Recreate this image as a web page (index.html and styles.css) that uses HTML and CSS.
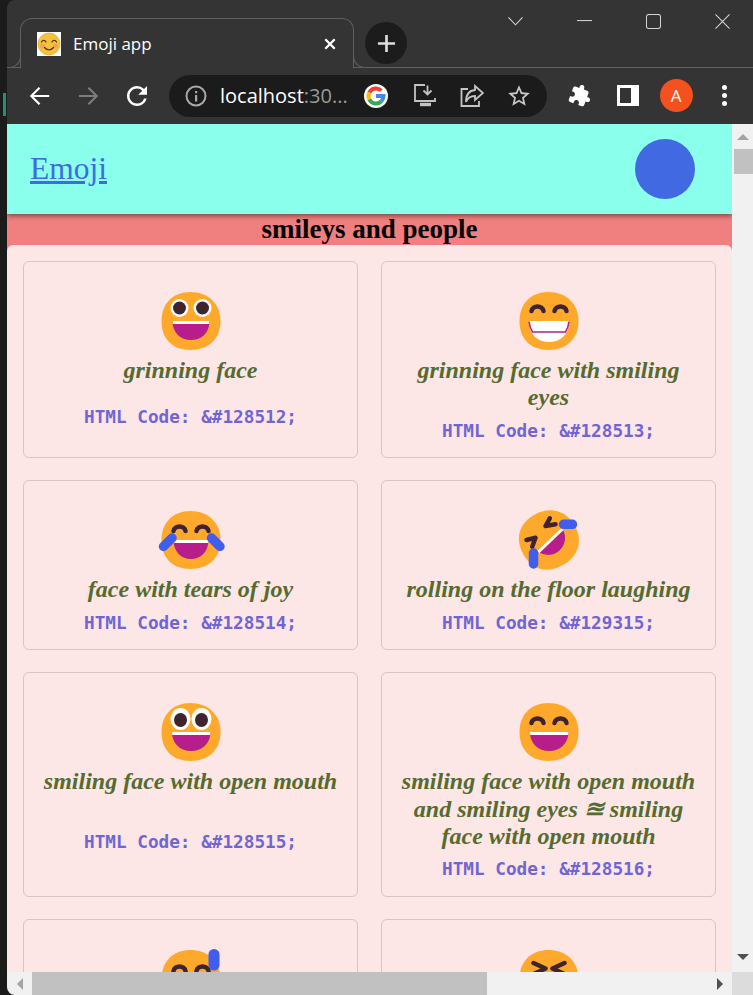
FILE: index.html
```html
<!DOCTYPE html>
<html>
<head>
  <title>Emoji app</title>
  <link rel="stylesheet" href="styles.css">
</head>
<body>
  <svg class="defs" width="0" height="0">
    <defs>
      <path id="face" d="M30 1C48 1 60 13 60 30C60 48 48 59 30 59C12 59 1 48 1 30C1 13 12 1 30 1Z"/>
    </defs>
  </svg>

  <div class="desktop">
    <div class="edge"><div class="edge-mark"></div></div>

    <div class="window">
      <!-- tab strip -->
      <div class="tabstrip">
        <div class="tab">
          <svg class="favicon" viewBox="0 0 24 24">
            <rect width="24" height="24" fill="#fff"/>
            <circle cx="12" cy="12" r="11" fill="#f5c33b" stroke="#e0a030" stroke-width=".6"/>
            <circle cx="5.5" cy="14" r="2.6" fill="#f3a35c"/>
            <circle cx="18.5" cy="14" r="2.6" fill="#f3a35c"/>
            <path d="M4.5 10c1-2.2 3.5-2.2 4.5 0M15 10c1-2.2 3.500-2.200 4.500 0M7.500 15.500c2.500 3.200 6.500 3.200 9 0" fill="none" stroke="#5b3a1c" stroke-width="1.300" stroke-linecap="round"/>
          </svg>
          <span class="tab-title">Emoji app</span>
          <svg class="tab-close" viewBox="0 0 14 14"><path d="M1.500 1.500L12.500 12.500M12.500 1.500L1.500 12.500"/></svg>
        </div>
        <div class="newtab">
          <svg viewBox="0 0 20 20"><path d="M10 1V19M1 10H19"/></svg>
        </div>
        <div class="wincontrols">
          <div class="winbtn"><svg viewBox="0 0 16 16"><path d="M.5 3.500L8 11.500L15.500 3.500"/></svg></div>
          <div class="winbtn"><svg viewBox="0 0 16 16"><path d="M0 7H16"/></svg></div>
          <div class="winbtn"><svg viewBox="0 0 16 16"><rect x=".5" y=".5" width="15" height="15" rx="2.500"/></svg></div>
          <div class="winbtn"><svg viewBox="0 0 16 16"><path d="M.5 .5L15.500 15.500M15.500 .5L.5 15.500"/></svg></div>
        </div>
      </div>

      <!-- toolbar -->
      <div class="toolbar">
        <div class="toolbtn">
          <svg class="line-icon" viewBox="0 0 24 24"><path d="M22 12H3M11.500 3L2.500 12L11.500 21"/></svg>
        </div>
        <div class="toolbtn dim">
          <svg class="line-icon" viewBox="0 0 24 24"><path d="M2 12H21M12.500 3L21.500 12L12.500 21"/></svg>
        </div>
        <div class="toolbtn reload">
          <svg class="fill-icon" viewBox="0 0 24 24"><path d="M17.650 6.350A7.958 7.958 0 0 0 12 4c-4.420 0-7.990 3.580-7.990 8s3.570 8 7.990 8c3.730 0 6.840-2.550 7.730-6h-2.080A5.990 5.990 0 0 1 12 18c-3.310 0-6-2.690-6-6s2.690-6 6-6c1.660 0 3.140.69 4.220 1.780L13 11h7V4l-2.350 2.350z"/></svg>
        </div>

        <div class="omnibox">
          <svg class="info" viewBox="0 0 24 24">
            <circle cx="12" cy="12" r="9.500" fill="none" stroke="#a8a8a8" stroke-width="2"/>
            <rect x="11" y="11" width="2.200" height="6.500" fill="#a8a8a8"/>
            <rect x="11" y="7" width="2.200" height="2.200" fill="#a8a8a8"/>
          </svg>
          <div class="url"><span class="host">localhost</span>:30...</div>
          <div class="omni-btn">
            <svg class="google" viewBox="0 0 24 24">
              <circle cx="12" cy="12" r="12" fill="#fff"/>
              <g fill="none" stroke-width="4">
                <path d="M17.300 6.700A7.500 7.500 0 0 0 5.300 8.600" stroke="#ea4335"/>
                <path d="M5.300 8.600A7.500 7.500 0 0 0 5.300 15.400" stroke="#fbbc05"/>
                <path d="M5.300 15.400A7.500 7.500 0 0 0 17.500 17.100" stroke="#34a853"/>
                <path d="M17.500 17.100A7.500 7.500 0 0 0 19.500 12H12" stroke="#4285f4"/>
              </g>
            </svg>
          </div>
          <div class="omni-btn after-google">
            <svg class="line-icon gray" viewBox="0 0 24 24">
              <path d="M12 1H2V17H22V14"/>
              <path d="M14.500 1.500V10M10.500 6.500L14.500 10.500L18.500 6.500"/>
              <path d="M7 20.500H18" class="thick"/>
            </svg>
          </div>
          <div class="omni-btn">
            <svg class="line-icon gray thin" viewBox="0 0 24 24">
              <path d="M8 5H1.500V22H19V17"/>
              <path d="M15 2L23 9L15 16V12C10 12 7.500 14 6 18C6 11 9 6.500 15 6Z"/>
            </svg>
          </div>
          <div class="omni-btn">
            <svg class="fill-icon gray" viewBox="0 0 24 24"><path d="M22 9.240l-7.190-.62L12 2 9.190 8.630 2 9.240l5.460 4.730L5.820 21 12 17.270 18.180 21l-1.630-7.030L22 9.240zM12 15.400l-3.760 2.270 1-4.280-3.320-2.880 4.380-.38L12 6.100l1.710 4.040 4.380.38-3.320 2.880 1 4.280L12 15.400z"/></svg>
          </div>
        </div>

        <div class="toolbtn first-ext">
          <svg class="fill-icon" viewBox="0 0 24 24"><path d="M20.500 11H19V7c0-1.100-.9-2-2-2h-4V3.500C13 2.120 11.880 1 10.500 1S8 2.120 8 3.500V5H4c-1.100 0-1.990.9-1.990 2v3.800H3.500c1.490 0 2.700 1.210 2.700 2.700s-1.210 2.700-2.700 2.700H2V20c0 1.100.9 2 2 2h3.800v-1.500c0-1.490 1.210-2.700 2.700-2.700 1.490 0 2.700 1.210 2.700 2.700V22H17c1.100 0 2-.9 2-2v-4h1.500c1.380 0 2.500-1.120 2.500-2.500S21.880 11 20.500 11z"/></svg>
        </div>
        <div class="toolbtn">
          <div class="sidepanel"><div class="sidepanel-left"></div></div>
        </div>
        <div class="toolbtn">
          <div class="avatar">A</div>
        </div>
        <div class="toolbtn">
          <div class="dots"><i></i><i></i><i></i></div>
        </div>
      </div>

      <!-- browser viewport -->
      <div class="viewport">
        <div class="page">
          <div class="header">
            <a class="brand" href="#">Emoji</a>
            <div class="user-dot"></div>
          </div>
          <div class="group-title">smileys and people</div>
          <div class="panel">
            <div class="grid">

              <div class="card">
                <svg class="emoji" viewBox="0 0 60 60">
                  <use href="#face" class="skin"/>
                  <circle cx="19" cy="17" r="9" class="white"/><circle cx="42" cy="17" r="9" class="white"/>
                  <circle cx="19" cy="17" r="6.500" class="pupil"/><circle cx="42" cy="17" r="6.500" class="pupil"/>
                  <path d="M12 30H49C49 42 41 49 30.500 49C20 49 12 42 12 30Z" class="mouth"/>
                  <path d="M12 30H49L48.700 33H12.300Z" class="white"/>
                </svg>
                <div class="name">grinning face</div>
                <div class="code">HTML Code: &amp;#128512;</div>
              </div>

              <div class="card">
                <svg class="emoji" viewBox="0 0 60 60">
                  <use href="#face" class="skin"/>
                  <path d="M13 20C14 14 24 14 25 20M36 20C37 14 47 14 48 20" class="arc"/>
                  <path d="M10 30H51C50 44 42 51 30.500 51C19 51 11 44 10 30Z" class="white"/>
                  <path d="M10.500 30.500C11 35 12 38 14 41H47C49 38 50 35 50.500 30.500" class="smile-line"/>
                </svg>
                <div class="name">grinning face with smiling eyes</div>
                <div class="code">HTML Code: &amp;#128513;</div>
              </div>

              <div class="card">
                <svg class="emoji" viewBox="0 0 60 60">
                  <use href="#face" class="skin"/>
                  <path d="M13 21C14 15 24 15 25 21M36 21C37 15 47 15 48 21" class="arc"/>
                  <path d="M13 30H48C48 42 40 49 30.500 49C21 49 13 42 13 30Z" class="mouth"/>
                  <path d="M13 30H48L47.700 33H13.300Z" class="white"/>
                  <path d="M11.500 28L3 36.500M51 28L59.500 36.500" class="tear"/>
                </svg>
                <div class="name">face with tears of joy</div>
                <div class="code">HTML Code: &amp;#128514;</div>
              </div>

              <div class="card">
                <svg class="emoji" viewBox="0 0 60 60">
                  <use href="#face" class="skin" transform="rotate(-30 30 30)"/>
                  <path d="M31.300 8.300L27 16L37 14.300M8 30L17 27.700L13.700 36.700" class="chevron"/>
                  <path d="M44 19A17 17 0 0 1 20 42Z" class="mouth"/>
                  <path d="M44 19L20 42" class="teeth"/>
                  <path d="M45 14.300H54M15 43V54" class="tear"/>
                </svg>
                <div class="name">rolling on the floor laughing</div>
                <div class="code">HTML Code: &amp;#129315;</div>
              </div>

              <div class="card">
                <svg class="emoji" viewBox="0 0 60 60">
                  <use href="#face" class="skin"/>
                  <ellipse cx="20" cy="17" rx="10" ry="11" class="white"/><ellipse cx="41" cy="17" rx="10" ry="11" class="white"/>
                  <ellipse cx="20" cy="18" rx="6.500" ry="7" class="pupil"/><ellipse cx="41" cy="18" rx="6.500" ry="7" class="pupil"/>
                  <path d="M11.500 30H50C50 42 41 49 30.500 49C20 49 11.500 42 11.500 30Z" class="mouth"/>
                  <path d="M11.500 30H50L49.700 33H11.800Z" class="white"/>
                </svg>
                <div class="name">smiling face with open mouth</div>
                <div class="code">HTML Code: &amp;#128515;</div>
              </div>

              <div class="card">
                <svg class="emoji" viewBox="0 0 60 60">
                  <use href="#face" class="skin"/>
                  <path d="M13 21C14 15 24 15 25 21M36 21C37 15 47 15 48 21" class="arc"/>
                  <path d="M11.500 30H50C50 42 41 49 30.500 49C20 49 11.500 42 11.500 30Z" class="mouth"/>
                  <path d="M11.500 30H50L49.700 33H11.800Z" class="white"/>
                </svg>
                <div class="name">smiling face with open mouth and smiling eyes ≊ smiling face with open mouth</div>
                <div class="code">HTML Code: &amp;#128516;</div>
              </div>

              <!-- last row runs under the scrollbar, only the emoji tops show -->
              <div class="card card-cut">
                <svg class="emoji" viewBox="0 0 60 60">
                  <use href="#face" class="skin"/>
                  <path d="M13 22C14 16 24 16 25 22M36 22C37 16 47 16 48 22" class="arc"/>
                  <path d="M53.500 5.500V16" class="tear wide"/>
                  <path d="M11.500 30H50C50 42 41 49 30.500 49C20 49 11.500 42 11.500 30Z" class="mouth"/>
                </svg>
              </div>

              <div class="card card-cut">
                <svg class="emoji" viewBox="0 0 60 60">
                  <use href="#face" class="skin"/>
                  <path d="M15 14L27 19.500L15 25M46 14L34 19.500L46 25" class="chevron"/>
                  <path d="M11.500 30H50C50 42 41 49 30.500 49C20 49 11.500 42 11.500 30Z" class="mouth"/>
                </svg>
              </div>

            </div>
          </div>
        </div>

        <div class="vbar">
          <div class="vbar-arrow"><div class="tri tri-up"></div></div>
          <div class="vbar-thumb"></div>
          <div class="vbar-arrow end"><div class="tri tri-down"></div></div>
        </div>
        <div class="hbar">
          <div class="hbar-arrow"><div class="tri tri-left"></div></div>
          <div class="hbar-thumb"></div>
          <div class="hbar-arrow end"><div class="tri tri-right"></div></div>
        </div>
        <div class="corner"></div>
      </div>
    </div>
  </div>
</body>
</html>
```

FILE: styles.css
```css
* {
  box-sizing: border-box;
}

html, body {
  margin: 0;
  height: 100%;
  overflow: hidden;
}

body {
  font-family: "Liberation Serif", serif;
  background-color: #1b1b1b;
}

.defs {
  display: block;
  height: 0;
}

.desktop {
  display: flex;
  width: 753px;
  height: 995px;
}

.edge {
  flex: 0 0 7px;
  padding-top: 93px;
  background-color: #1b1b1b;
}

.edge-mark {
  width: 3px;
  height: 23px;
  margin-left: 3px;
  background-color: #2a8c72;
}

.window {
  flex: 1;
  min-width: 0;
  display: flex;
  flex-direction: column;
  overflow: hidden;
  background-color: #343434;
  border-radius: 8px 0 0 8px;
}

/* tab strip */
.tabstrip {
  flex: 0 0 68px;
  display: flex;
  align-items: flex-start;
  border-bottom: 1px solid #606060;
}

.tab {
  position: relative;
  display: flex;
  align-items: center;
  width: 334px;
  height: 50px;
  margin: 18px 0 -1px 13px;
  padding: 0 17px 0 16px;
  background-color: #343434;
  border: 1px solid #606060;
  border-bottom: none;
  border-radius: 12px 12px 0 0;
  color: #fff;
}

.tab::before,
.tab::after {
  content: "";
  position: absolute;
  bottom: 0;
  width: 13px;
  height: 13px;
  border-bottom: 1px solid #606060;
  background-color: #343434;
}

.tab::before {
  left: -14px;
  border-right: 1px solid #606060;
  border-bottom-right-radius: 12px;
}

.tab::after {
  right: -14px;
  border-left: 1px solid #606060;
  border-bottom-left-radius: 12px;
}

.favicon {
  flex: 0 0 24px;
  width: 24px;
  height: 24px;
}

.tab-title {
  margin-left: 12px;
  font-family: "Open Sans", sans-serif;
  font-size: 17px;
}

.tab-close {
  width: 12px;
  height: 12px;
  margin-left: auto;
  fill: none;
  stroke: #fff;
  stroke-width: 2.600;
}

.newtab {
  display: flex;
  align-items: center;
  justify-content: center;
  width: 42px;
  height: 42px;
  margin: 22px 0 0 11px;
  border-radius: 50%;
  background-color: #1c1c1c;
}

.newtab svg {
  width: 19px;
  height: 19px;
  fill: none;
  stroke: #ddd;
  stroke-width: 2.800;
}

.wincontrols {
  display: flex;
  margin-left: auto;
  margin-right: -4px;
}

.winbtn {
  display: flex;
  align-items: center;
  justify-content: center;
  width: 69px;
  height: 42px;
}

.winbtn svg {
  width: 15px;
  height: 15px;
  fill: none;
  stroke: #d6d6d6;
  stroke-width: 1.100;
}

/* toolbar */
.toolbar {
  flex: 0 0 56px;
  display: flex;
  align-items: center;
  padding-left: 9px;
  padding-bottom: 1px;
}

.toolbtn {
  flex: 0 0 48px;
  display: flex;
  align-items: center;
  justify-content: center;
  height: 42px;
}

.toolbtn.reload {
  margin-left: 1px;
}

.toolbtn.reload .fill-icon {
  width: 30px;
  height: 30px;
}

.toolbtn.first-ext {
  margin-left: 9px;
}

.line-icon {
  width: 22px;
  height: 22px;
  fill: none;
  stroke: #fff;
  stroke-width: 2.400;
}

.dim .line-icon {
  stroke: #7c7c7c;
}

.line-icon.gray {
  width: 24px;
  height: 24px;
  stroke: #c4c4c4;
  stroke-width: 1.800;
}

.line-icon .thick {
  stroke-width: 3.400;
}

.fill-icon {
  width: 26px;
  height: 26px;
  fill: #fff;
}

.fill-icon.gray {
  fill: #c8c8c8;
}

.first-ext .fill-icon {
  width: 23px;
  height: 23px;
  transform: rotate(20deg);
}

.omnibox {
  flex: 0 0 378px;
  display: flex;
  align-items: center;
  height: 42px;
  margin-left: 8px;
  padding-left: 15px;
  border-radius: 21px;
  background-color: #1b1b1b;
}

.info {
  flex: 0 0 24px;
  width: 24px;
  height: 24px;
}

.url {
  flex: 0 0 132px;
  margin-left: 12px;
  font-family: "Open Sans", sans-serif;
  font-size: 20px;
  color: #9a9a9a;
  white-space: nowrap;
  overflow: hidden;
}

.host {
  color: #fff;
}

.omni-btn {
  flex: 0 0 47px;
  display: flex;
  align-items: center;
  justify-content: center;
}

.omni-btn.after-google {
  margin-left: 2px;
}

.google {
  width: 24px;
  height: 24px;
}

.sidepanel {
  width: 22px;
  height: 21px;
  padding: 3px 8px 3px 3px;
  background-color: #fff;
}

.sidepanel-left {
  height: 100%;
  background-color: #343434;
}

.avatar {
  display: flex;
  align-items: center;
  justify-content: center;
  width: 33px;
  height: 33px;
  border-radius: 50%;
  background-color: #f4511e;
  font-family: "Open Sans", sans-serif;
  font-size: 17px;
  color: #fff;
}

.dots {
  display: flex;
  flex-direction: column;
  gap: 3px;
}

.dots i {
  display: block;
  width: 5px;
  height: 5px;
  border-radius: 50%;
  background-color: #fff;
}

/* page area */
.viewport {
  flex: 1;
  min-height: 0;
  display: grid;
  grid-template-columns: 725px 21px;
  grid-template-rows: 848px 23px;
}

.page {
  overflow: hidden;
  background-color: #f08080;
}

.header {
  position: relative;
  display: flex;
  align-items: center;
  justify-content: space-between;
  height: 90px;
  padding: 0 37px 0 23px;
  background-color: #8affeb;
  box-shadow: 0 2px 5px rgba(0, 0, 0, 0.45);
}

.brand {
  font-size: 31.500px;
  color: #4169e1;
}

.user-dot {
  width: 60px;
  height: 60px;
  border-radius: 50%;
  background-color: #4169e1;
}

.group-title {
  height: 31px;
  font-size: 27px;
  font-weight: bold;
  line-height: 31px;
  text-align: center;
  color: #000;
}

.panel {
  padding: 16px;
  border-radius: 6px 6px 0 0;
  background-color: #fde6e6;
}

.grid {
  display: grid;
  grid-template-columns: 1fr 1fr;
  gap: 22px 23px;
}

.card {
  display: flex;
  flex-direction: column;
  align-items: center;
  padding: 29px 15px 15.700px;
  border: 1px solid #dcc3c3;
  border-radius: 6px;
  text-align: center;
}

.card-cut {
  min-height: 170px;
}

.emoji {
  flex: 0 0 60px;
  width: 61px;
  height: 60px;
  overflow: visible;
}

.name {
  padding: 6px 0 8px;
  font-size: 24px;
  font-style: italic;
  font-weight: bold;
  line-height: 27.300px;
  color: #556b2f;
}

.code {
  margin: auto 0;
  font-family: "DejaVu Sans Mono", monospace;
  font-size: 17.700px;
  font-weight: bold;
  line-height: 22px;
  color: #6f66d4;
}

/* emoji parts */
.skin { fill: #ffa92c; }
.white { fill: #fff; }
.pupil { fill: #3f2430; }
.mouth { fill: #b81d8c; }

.arc {
  fill: none;
  stroke: #3f2430;
  stroke-width: 4.500;
  stroke-linecap: round;
}

.chevron {
  fill: none;
  stroke: #3f2430;
  stroke-width: 4.500;
  stroke-linecap: round;
  stroke-linejoin: round;
}

.smile-line {
  fill: none;
  stroke: #b81d8c;
  stroke-width: 1.600;
}

.teeth {
  stroke: #fff;
  stroke-width: 3;
}

.tear {
  fill: none;
  stroke: #3f5ef0;
  stroke-width: 9.500;
  stroke-linecap: round;
}

.tear.wide {
  stroke-width: 11;
}

/* scrollbars */
.vbar {
  display: flex;
  flex-direction: column;
  background-color: #f1f1f1;
}

.vbar-arrow {
  flex: 0 0 25px;
  display: flex;
  align-items: center;
  justify-content: center;
}

.vbar-arrow.end {
  margin-top: auto;
  margin-bottom: 3px;
}

.vbar-thumb {
  height: 25px;
  margin-left: 2px;
  background-color: #c1c1c1;
}

.hbar {
  display: flex;
  background-color: #f1f1f1;
}

.hbar-arrow {
  flex: 0 0 25px;
  display: flex;
  align-items: center;
  justify-content: center;
}

.hbar-arrow.end {
  margin-left: auto;
}

.hbar-thumb {
  width: 455px;
  background-color: #c1c1c1;
}

.corner {
  background-color: #dcdcdc;
}

.tri {
  width: 0;
  height: 0;
  border-style: solid;
  border-color: transparent;
}

.tri-up {
  border-width: 0 6px 6px;
  border-bottom-color: #a3a3a3;
}

.tri-down {
  border-width: 6px 6px 0;
  border-top-color: #505050;
}

.tri-left {
  border-width: 6px 6px 6px 0;
  border-right-color: #a3a3a3;
}

.tri-right {
  border-width: 6px 0 6px 6px;
  border-left-color: #505050;
}
```
